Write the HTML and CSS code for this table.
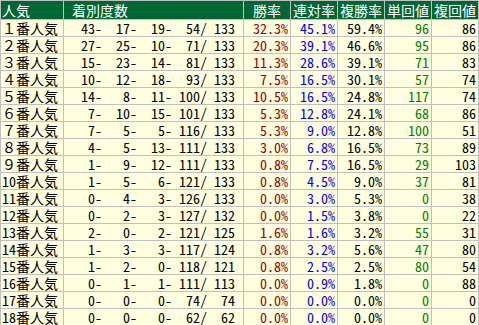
FILE: index.html
```html
<!DOCTYPE html>
<html lang="ja">
<head>
<meta charset="utf-8">
<link rel="stylesheet" href="styles.css">
</head>
<body>
<table class="stats">
  <colgroup>
    <col class="c-name"><col class="c-count"><col class="c-num"><col class="c-num"><col class="c-num"><col class="c-num"><col class="c-num">
  </colgroup>
  <thead>
    <tr><th class="h-left">人気</th><th class="h-count">着別度数</th><th>勝率</th><th>連対率</th><th>複勝率</th><th>単回値</th><th>複回値</th></tr>
  </thead>
  <tbody>
    <tr><td class="name">１番人気</td><td class="count"><span>43-</span><span>17-</span><span>19-</span><span>54/</span><span>133</span></td><td class="win">32.3%</td><td class="ren">45.1%</td><td class="fuku">59.4%</td><td class="tan">96</td><td class="fk">86</td></tr>
    <tr><td class="name">２番人気</td><td class="count"><span>27-</span><span>25-</span><span>10-</span><span>71/</span><span>133</span></td><td class="win">20.3%</td><td class="ren">39.1%</td><td class="fuku">46.6%</td><td class="tan">95</td><td class="fk">86</td></tr>
    <tr><td class="name">３番人気</td><td class="count"><span>15-</span><span>23-</span><span>14-</span><span>81/</span><span>133</span></td><td class="win">11.3%</td><td class="ren">28.6%</td><td class="fuku">39.1%</td><td class="tan">71</td><td class="fk">83</td></tr>
    <tr><td class="name">４番人気</td><td class="count"><span>10-</span><span>12-</span><span>18-</span><span>93/</span><span>133</span></td><td class="win">7.5%</td><td class="ren">16.5%</td><td class="fuku">30.1%</td><td class="tan">57</td><td class="fk">74</td></tr>
    <tr><td class="name">５番人気</td><td class="count"><span>14-</span><span>8-</span><span>11-</span><span>100/</span><span>133</span></td><td class="win">10.5%</td><td class="ren">16.5%</td><td class="fuku">24.8%</td><td class="tan">117</td><td class="fk">74</td></tr>
    <tr><td class="name">６番人気</td><td class="count"><span>7-</span><span>10-</span><span>15-</span><span>101/</span><span>133</span></td><td class="win">5.3%</td><td class="ren">12.8%</td><td class="fuku">24.1%</td><td class="tan">68</td><td class="fk">86</td></tr>
    <tr><td class="name">７番人気</td><td class="count"><span>7-</span><span>5-</span><span>5-</span><span>116/</span><span>133</span></td><td class="win">5.3%</td><td class="ren">9.0%</td><td class="fuku">12.8%</td><td class="tan">100</td><td class="fk">51</td></tr>
    <tr><td class="name">８番人気</td><td class="count"><span>4-</span><span>5-</span><span>13-</span><span>111/</span><span>133</span></td><td class="win">3.0%</td><td class="ren">6.8%</td><td class="fuku">16.5%</td><td class="tan">73</td><td class="fk">89</td></tr>
    <tr><td class="name">９番人気</td><td class="count"><span>1-</span><span>9-</span><span>12-</span><span>111/</span><span>133</span></td><td class="win">0.8%</td><td class="ren">7.5%</td><td class="fuku">16.5%</td><td class="tan">29</td><td class="fk">103</td></tr>
    <tr><td class="name">10番人気</td><td class="count"><span>1-</span><span>5-</span><span>6-</span><span>121/</span><span>133</span></td><td class="win">0.8%</td><td class="ren">4.5%</td><td class="fuku">9.0%</td><td class="tan">37</td><td class="fk">81</td></tr>
    <tr><td class="name">11番人気</td><td class="count"><span>0-</span><span>4-</span><span>3-</span><span>126/</span><span>133</span></td><td class="win">0.0%</td><td class="ren">3.0%</td><td class="fuku">5.3%</td><td class="tan">0</td><td class="fk">38</td></tr>
    <tr><td class="name">12番人気</td><td class="count"><span>0-</span><span>2-</span><span>3-</span><span>127/</span><span>132</span></td><td class="win">0.0%</td><td class="ren">1.5%</td><td class="fuku">3.8%</td><td class="tan">0</td><td class="fk">22</td></tr>
    <tr><td class="name">13番人気</td><td class="count"><span>2-</span><span>0-</span><span>2-</span><span>121/</span><span>125</span></td><td class="win">1.6%</td><td class="ren">1.6%</td><td class="fuku">3.2%</td><td class="tan">55</td><td class="fk">31</td></tr>
    <tr><td class="name">14番人気</td><td class="count"><span>1-</span><span>3-</span><span>3-</span><span>117/</span><span>124</span></td><td class="win">0.8%</td><td class="ren">3.2%</td><td class="fuku">5.6%</td><td class="tan">47</td><td class="fk">80</td></tr>
    <tr><td class="name">15番人気</td><td class="count"><span>1-</span><span>2-</span><span>0-</span><span>118/</span><span>121</span></td><td class="win">0.8%</td><td class="ren">2.5%</td><td class="fuku">2.5%</td><td class="tan">80</td><td class="fk">54</td></tr>
    <tr><td class="name">16番人気</td><td class="count"><span>0-</span><span>1-</span><span>1-</span><span>111/</span><span>113</span></td><td class="win">0.0%</td><td class="ren">0.9%</td><td class="fuku">1.8%</td><td class="tan">0</td><td class="fk">88</td></tr>
    <tr><td class="name">17番人気</td><td class="count"><span>0-</span><span>0-</span><span>0-</span><span>74/</span><span>74</span></td><td class="win">0.0%</td><td class="ren">0.0%</td><td class="fuku">0.0%</td><td class="tan">0</td><td class="fk">0</td></tr>
    <tr><td class="name">18番人気</td><td class="count"><span>0-</span><span>0-</span><span>0-</span><span>62/</span><span>62</span></td><td class="win">0.0%</td><td class="ren">0.0%</td><td class="fuku">0.0%</td><td class="tan">0</td><td class="fk">0</td></tr>
  </tbody>
</table>
</body>
</html>
```
FILE: styles.css
```css
html, body {
  margin: 0;
  padding: 0;
  background: #ffffff;
}
.stats {
  border-collapse: collapse;
  table-layout: fixed;
  width: 479px;
  font-family: "Noto Sans Mono CJK JP", "Noto Sans CJK JP", monospace;
  font-size: 14px;
  color: #000000;
}
.c-name { width: 63px; }
.c-count { width: 180px; }
.c-num { width: 47px; }
.stats th, .stats td {
  border: 1px solid #c0c0c0;
  padding: 0;
  white-space: nowrap;
  overflow: hidden;
}
.stats th {
  height: 18px;
  line-height: 18px;
  background: #006633;
  color: #ffffff;
  font-weight: normal;
  text-align: center;
}
.stats th.h-left { text-align: left; padding-left: 1px; }
.stats th.h-count { text-align: left; padding-left: 8px; }
.stats td {
  height: 16px;
  line-height: 16px;
  background: #ffffe0;
  text-align: right;
  padding-right: 2px;
}
.stats td.name { text-align: left; padding-left: 1px; padding-right: 0; }
.stats td.count {
  padding-right: 8px;
}
.count span {
  display: inline-block;
  width: 35px;
  text-align: right;
}
.count span:last-child { width: 28px; }
.win { color: #990000; }
.ren { color: #0000ff; }
.fuku { color: #000000; }
.tan { color: #008000; }
.fk { color: #000000; }
```
